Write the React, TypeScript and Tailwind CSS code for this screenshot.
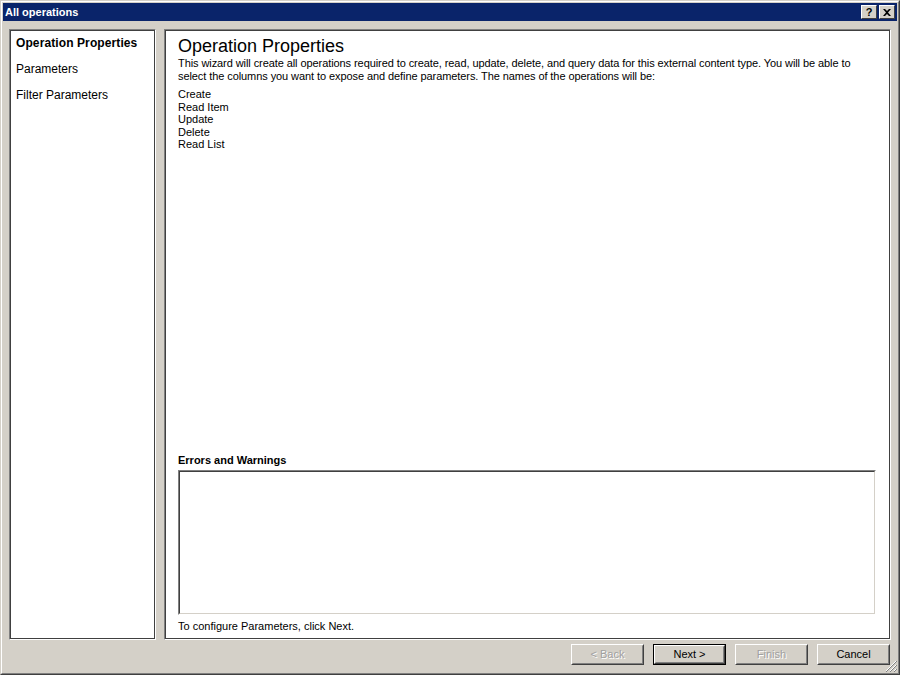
import React from "react";

const font = { fontFamily: "'Liberation Sans', Arial, sans-serif" };

function Btn({ label, disabled, def }: { label: string; disabled?: boolean; def?: boolean }) {
  return (
    <div className={`w-[73px] h-[21px] ${def ? "border border-black" : ""}`}>
      <div className="w-full h-full border border-t-white border-l-white border-r-[#404040] border-b-[#404040]">
        <div className="w-full h-full border border-t-[#d4d0c8] border-l-[#d4d0c8] border-r-[#808080] border-b-[#808080] flex items-center justify-center text-[11px]">
          {disabled ? (
            <span className="text-[#a0a0a0] [text-shadow:1px_1px_0_#ffffff]">{label}</span>
          ) : (
            <span className="text-black">{label}</span>
          )}
        </div>
      </div>
    </div>
  );
}

export default function App() {
  return (
    <div className="w-[900px] h-[675px] bg-[#d4d0c8] border border-t-[#d4d0c8] border-l-[#d4d0c8] border-r-[#404040] border-b-[#404040] text-black" style={font}>
      <div className="w-full h-full border border-t-white border-l-white border-r-[#808080] border-b-[#808080] p-[1px] flex flex-col relative">
        {/* title bar */}
        <div className="h-[18px] bg-[#0a246a] flex items-center justify-between pl-[2px] pr-[2px]">
          <span className="text-white font-bold text-[11px] leading-none">All operations</span>
          <div className="flex gap-[2px]">
            {["?", "x"].map((c) => (
              <div key={c} className="w-[16px] h-[14px] bg-[#d4d0c8] border border-t-white border-l-white border-r-[#404040] border-b-[#404040] flex items-center justify-center text-[11px] font-bold leading-none">
                {c === "?" ? "?" : (
                  <svg width="8" height="7" viewBox="0 0 8 7"><path d="M0 0L2 0L4 2L6 0L8 0L5 3.5L8 7L6 7L4 5L2 7L0 7L3 3.5Z" fill="black" /></svg>
                )}
              </div>
            ))}
          </div>
        </div>
        {/* body */}
        <div className="flex gap-[8px] pl-[6px] pr-[6px] pt-[8px] h-[619px]">
          {/* left panel */}
          <div className="w-[147px] h-full border border-t-[#808080] border-l-[#808080] border-r-white border-b-white">
            <div className="w-full h-full bg-white border border-[#404040] pl-[5px] pt-[5px] text-[12px]">
              <div className="h-[26px] font-bold leading-[14px] tracking-[0.1px]">Operation Properties</div>
              <div className="h-[26px] leading-[14px]">Parameters</div>
              <div className="h-[26px] leading-[14px]">Filter Parameters</div>
            </div>
          </div>
          {/* right panel */}
          <div className="flex-1 h-full border border-t-[#808080] border-l-[#808080] border-r-white border-b-white">
            <div className="w-full h-full bg-white border border-[#404040] pl-[12px] pr-[12px] pt-[5px] flex flex-col text-[11px]">
              <div className="text-[18px] leading-[20px]">Operation Properties</div>
              <div className="leading-[13px] mt-[1px] tracking-[-0.08px]">
                This wizard will create all operations required to create, read, update, delete, and query data for this external content type. You will be able to select the columns you want to expose and define parameters. The names of the operations will be:
              </div>
              <div className="leading-[12.6px] mt-[5px]">
                <div>Create</div>
                <div>Read Item</div>
                <div>Update</div>
                <div>Delete</div>
                <div>Read List</div>
              </div>
              <div className="flex-1" />
              <div className="font-bold leading-[13px] mb-[3px]">Errors and Warnings</div>
              <div className="h-[145px] mr-[1px] border border-t-[#808080] border-l-[#808080] border-r-white border-b-white">
                <div className="w-full h-full border border-t-[#404040] border-l-[#404040] border-r-[#d4d0c8] border-b-[#d4d0c8] bg-white" />
              </div>
              <div className="leading-[13px] mt-[5px] mb-[5px]">To configure Parameters, click Next.</div>
            </div>
          </div>
        </div>
        {/* buttons */}
        <div className="flex justify-end gap-[9px] pr-[7px] mt-[4px]">
          <Btn label="< Back" disabled />
          <Btn label="Next >" def />
          <Btn label="Finish" disabled />
          <Btn label="Cancel" />
        </div>
        {/* grip */}
        <svg className="absolute right-[1px] bottom-[1px]" width="12" height="12" viewBox="0 0 12 12">
          <path d="M11 1L1 11M11 5L5 11M11 9L9 11" stroke="white" strokeWidth="1" />
          <path d="M12 1L1 12M12 5L5 12M12 9L9 12" stroke="#808080" strokeWidth="1" />
        </svg>
      </div>
    </div>
  );
}
